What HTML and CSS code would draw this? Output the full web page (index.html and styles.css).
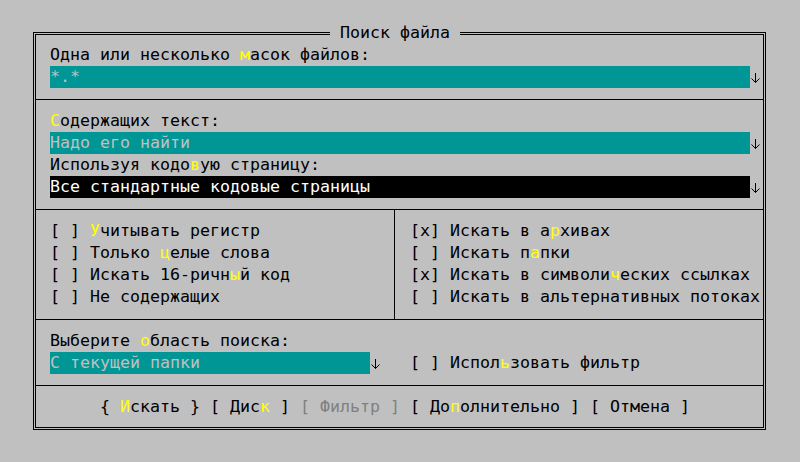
FILE: index.html
```html
<!DOCTYPE html>
<html lang="ru">
<head>
<meta charset="utf-8">
<title>Поиск файла</title>
<link rel="stylesheet" href="styles.css">
</head>
<body>
<div class="dialog">
  <div class="title">Поиск файла</div>
  <div class="pad">
    <div class="row">Одна или несколько <span class="hk">м</span>асок файлов:</div>
    <div class="row combo"><span class="field teal wide">*.*</span><svg class="arrow" width="10" height="22" viewBox="0 0 10 22"><path d="M5.5 7V16.5M1.5 12.5L5.5 16.5L9.5 12.5" fill="none" stroke="#000" stroke-width="1"/></svg></div>
  </div>
  <div class="sep"></div>
  <div class="pad">
    <div class="row"><span class="hk">С</span>одержащих текст:</div>
    <div class="row combo"><span class="field teal wide">Надо его найти</span><svg class="arrow" width="10" height="22" viewBox="0 0 10 22"><path d="M5.5 7V16.5M1.5 12.5L5.5 16.5L9.5 12.5" fill="none" stroke="#000" stroke-width="1"/></svg></div>
    <div class="row">Используя кодо<span class="hk">в</span>ую страницу:</div>
    <div class="row combo"><span class="field black wide">Все стандартные кодовые страницы</span><svg class="arrow" width="10" height="22" viewBox="0 0 10 22"><path d="M5.5 7V16.5M1.5 12.5L5.5 16.5L9.5 12.5" fill="none" stroke="#000" stroke-width="1"/></svg></div>
  </div>
  <div class="opts">
    <div class="col left">
      <div class="row">[ ] <span class="hk">У</span>читывать регистр</div>
      <div class="row">[ ] Только <span class="hk">ц</span>елые слова</div>
      <div class="row">[ ] Искать 16-ричн<span class="hk">ы</span>й код</div>
      <div class="row">[ ] Не содержащих</div>
    </div>
    <div class="col right">
      <div class="row">[x] Искать в а<span class="hk">р</span>хивах</div>
      <div class="row">[ ] Искать п<span class="hk">а</span>пки</div>
      <div class="row">[x] Искать в символи<span class="hk">ч</span>еских ссылках</div>
      <div class="row">[ ] Искать в альтернативных потоках</div>
    </div>
  </div>
  <div class="pad">
    <div class="row">Выберите <span class="hk">о</span>бласть поиска:</div>
    <div class="row combo"><span class="field teal short">С текущей папки</span><svg class="arrow" width="10" height="22" viewBox="0 0 10 22"><path d="M5.5 7V16.5M1.5 12.5L5.5 16.5L9.5 12.5" fill="none" stroke="#000" stroke-width="1"/></svg><span class="check">[ ] Испол<span class="hk">ь</span>зовать фильтр</span></div>
  </div>
  <div class="sep"></div>
  <div class="buttons row">{ <span class="hk">И</span>скать } [ Дис<span class="hk">к</span> ] <span class="disabled">[ Фильтр ]</span> [ До<span class="hk">п</span>олнительно ] [ Отмена ]</div>
</div>
</body>
</html>
```
FILE: styles.css
```css
html, body {
  margin: 0;
  padding: 0;
  background: #c0c0c0;
}
body {
  width: 800px;
  height: 462px;
  overflow: hidden;
  font-family: "DejaVu Sans Mono", "Liberation Mono", monospace;
  font-size: 16.61px;
  color: #000;
}
.dialog {
  position: relative;
  box-sizing: border-box;
  margin: 32px 0 0 33px;
  width: 733px;
  height: 398px;
  border: 3px double #000;
  padding: 9px 0;
}
.title {
  position: absolute;
  top: -13px;
  left: 294px;
  padding: 0 10px;
  height: 22px;
  line-height: 22px;
  background: #c0c0c0;
  white-space: pre;
}
.pad {
  padding-left: 14px;
}
.row {
  height: 22px;
  line-height: 22px;
  white-space: pre;
}
.combo {
  display: flex;
}
.field {
  display: block;
  height: 22px;
}
.wide { width: 700px; }
.short { width: 320px; }
.teal {
  background: #009696;
  color: #c0c0c0;
}
.black {
  background: #000;
  color: #fff;
}
.arrow {
  display: block;
  flex: none;
  width: 10px;
  height: 22px;
}
.check {
  margin-left: 30px;
}
.hk {
  color: #ffff00;
}
.sep {
  height: 11px;
  border-bottom: 1px solid #000;
  margin-bottom: 10px;
}
.opts {
  display: grid;
  grid-template-columns: 359px 1fr;
  margin: 11px 0 10px;
  border-top: 1px solid #000;
  border-bottom: 1px solid #000;
}
.col {
  padding: 10px 0 11px;
}
.left {
  padding-left: 14px;
  border-right: 1px solid #000;
}
.right {
  padding-left: 15px;
}
.buttons {
  padding-left: 64px;
}
.disabled {
  color: #808080;
}
```
